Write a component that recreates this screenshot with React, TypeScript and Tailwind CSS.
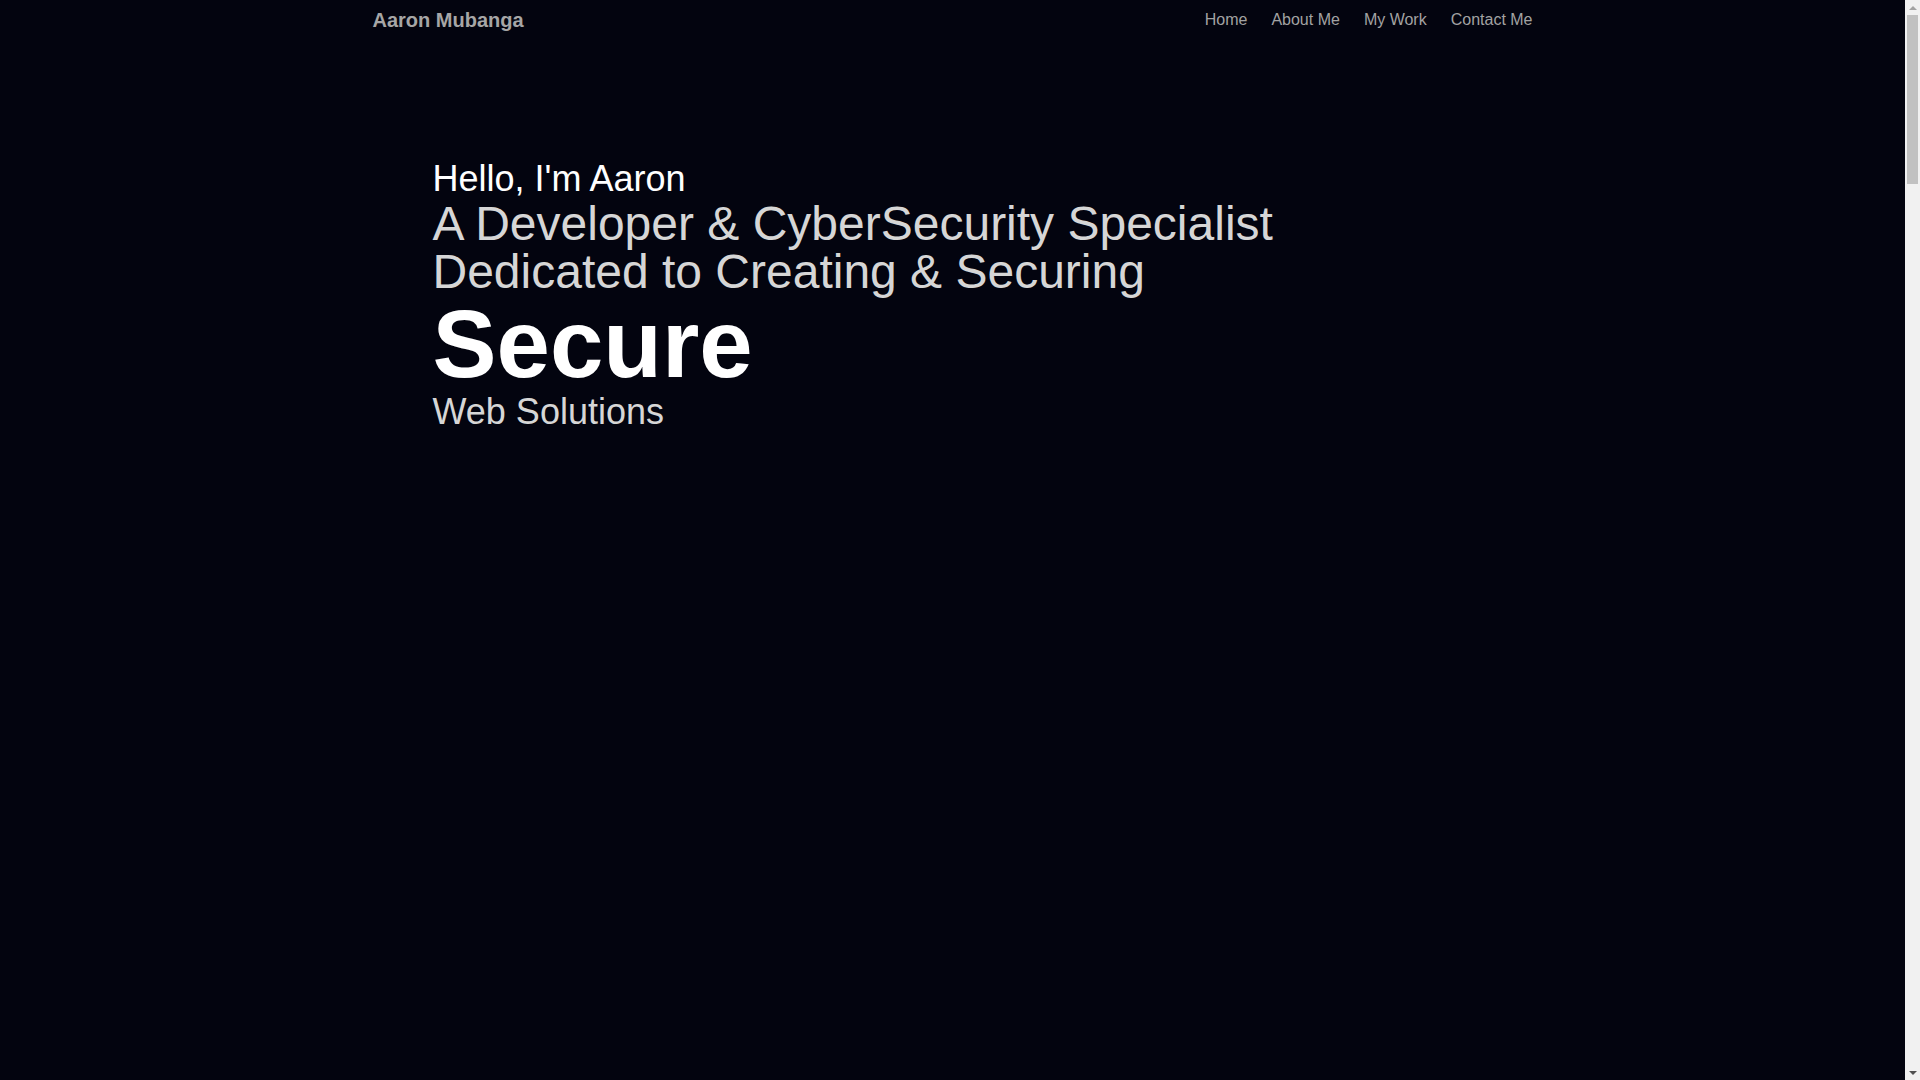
import React from "react";

function FakeScrollbar() {
  return (
    <div className="fixed right-0 top-0 flex h-[1080px] w-[15px] flex-col items-center bg-[#f1f1f1]">
      <div className="flex h-[15px] w-full items-center justify-center">
        <div className="h-0 w-0 border-x-[4px] border-b-[4px] border-x-transparent border-b-[#a3a3a3]" />
      </div>
      <div className="h-[169px] w-[11px] bg-[#c1c1c1]" />
      <div className="flex-1" />
      <div className="flex h-[15px] w-full items-center justify-center">
        <div className="h-0 w-0 border-x-[4px] border-t-[4px] border-x-transparent border-t-[#505050]" />
      </div>
    </div>
  );
}

export default function App() {
  const links = ["Home", "About Me", "My Work", "Contact Me"];
  return (
    <div
      className="min-h-[6710px] bg-[#03040f] text-white"
      style={{ fontFamily: '"Liberation Sans", Arial, sans-serif' }}
    >
      <div className="w-[1905px]">
        <header className="mx-auto flex h-[39px] w-[1160px] items-center justify-between">
          <a className="mt-[1px] text-[20px] font-bold leading-[23px] text-[#a6a6a6]">Aaron Mubanga</a>
          <nav className="flex items-center gap-6">
            {links.map((l) => (
              <a key={l} className="text-[16px] leading-[18px] text-[#a2a2a2]">
                {l}
              </a>
            ))}
          </nav>
        </header>
        <section className="mx-auto w-[1040px] pt-[119px]">
          <h1 className="text-[36px] font-normal leading-[42px] text-white">Hello, I'm Aaron</h1>
          <h2 className="text-[48px] font-normal leading-none text-[#d6d6d6]">
            A Developer &amp; CyberSecurity Specialist
            <br />
            Dedicated to Creating &amp; Securing
          </h2>
          <div className="text-[96px] font-bold leading-none text-white">Secure</div>
          <div className="text-[36px] font-normal leading-[40px] text-[#d6d6d6]">Web Solutions</div>
        </section>
      </div>
      <FakeScrollbar />
    </div>
  );
}
